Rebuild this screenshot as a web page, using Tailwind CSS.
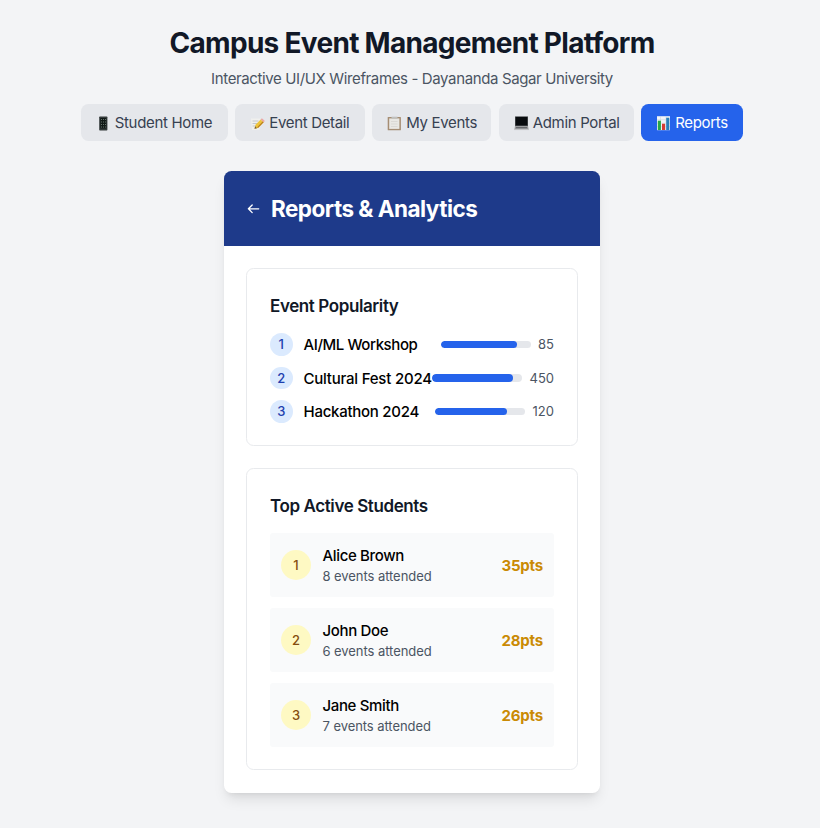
<!DOCTYPE html>
<html lang="en">
<head>
<meta charset="utf-8">
<title>Campus Event Management Platform</title>
<script src="https://cdn.jsdelivr.net/npm/@tailwindcss/browser@4"></script>
</head>
<body class="h-[828px] overflow-hidden bg-[#f3f4f6] pl-1 font-['Inter',sans-serif] text-[15px] text-black">
<header class="flex flex-col items-center pt-[26px]">
  <h1 class="h-[34px] whitespace-nowrap text-[28px] leading-[34px] font-bold tracking-[-0.7px] text-[#111827]">Campus Event Management Platform</h1>
  <p class="mt-[8px] h-[22px] whitespace-nowrap text-[15px] leading-[22px] tracking-[-0.37px] text-[#4b5563]">Interactive UI/UX Wireframes - Dayananda Sagar University</p>
  <nav class="mt-[14px] flex gap-[7.5px] tracking-[-0.33px] text-[#374151]">
    <button class="flex h-[37px] w-[147px] items-center rounded-[7.5px] bg-[#e5e7eb] pt-px pl-[15px] whitespace-nowrap">
      <svg class="mr-1 h-[15px] w-[15px]" viewBox="0 0 15 15"><rect x="3.2" y=".5" width="8.2" height="14" rx=".7" fill="#343b3b"/><rect x="4.3" y="2" width="6" height="10.5" fill="#111917"/><path d="M5 3.5h1m1 0h1m1 0h1M5 6h1m1 0h1m1 0h1M5 8.5h1m1 0h1m1 0h1M5 11h1m1 0h1m1 0h1" stroke="#65736b"/></svg>
      <span>Student Home</span>
    </button>
    <button class="flex h-[37px] w-[129.5px] items-center rounded-[7.5px] bg-[#e5e7eb] pt-px pl-[15px] whitespace-nowrap">
      <svg class="mr-1 h-[15px] w-[15px]" viewBox="0 0 15 15"><path d="M1 2.5h9.5l-1 11.5H2z" fill="#f0f0ee"/><path d="M2.5 5h6m-6 2.5h5m-5 2.5h3" stroke="#b8bdc5" stroke-width=".8"/><path d="M4.5 12.8l1-4 5.2-5.3 3 2.7L8 12z" fill="#edc43b"/><path d="M7.2 11.2l5.7-6 .8 1L8 12z" fill="#b77d20"/><path d="M10.7 3.5l1.2-1.2 3 2.7-1.2 1.2z" fill="#eba5a5"/><path d="M4.5 12.8l.7-2.5 1.8 1.9z" fill="#705b40"/></svg>
      <span>Event Detail</span>
    </button>
    <button class="flex h-[37px] w-[119px] items-center rounded-[7.5px] bg-[#e5e7eb] pt-px pl-[15px] whitespace-nowrap">
      <svg class="mr-1 h-[15px] w-[15px]" viewBox="0 0 15 15"><rect x=".7" y="1" width="13.2" height="13.3" rx=".6" fill="#a58d73"/><path d="M2.2 2.4h10.2v10.5H2.2z" fill="#e9e8e4"/><path d="M4 5.5h6.5M4 8h6.5M4 10.5h6.5" stroke="#d5d3cf" stroke-width=".7"/><path d="M4.5.7h6v2h-6z" fill="#bfc0bf"/></svg>
      <span>My Events</span>
    </button>
    <button class="flex h-[37px] w-[135px] items-center rounded-[7.5px] bg-[#e5e7eb] pt-px pl-[15px] whitespace-nowrap">
      <svg class="mr-1 h-[15px] w-[15px]" viewBox="0 0 15 15"><path d="M1 .4h13v9.7H1z" fill="#55595c"/><path d="M1.6.9h11.8v8.6H1.6z" fill="#080b0e"/><path d="M1 10.1h13l.7 3.6H.3z" fill="#9d9ea0"/><path d="M2 10.9h11l.3 1.3H1.7z" fill="#66686c"/><path d="M.3 13.2h14.4v.9H.3z" fill="#c6c6c8"/></svg>
      <span>Admin Portal</span>
    </button>
    <button class="flex h-[37px] w-[102px] items-center rounded-[7.5px] bg-[#2563eb] pt-px pl-[15px] whitespace-nowrap text-white">
      <svg class="mr-1 h-[15px] w-[15px]" viewBox="0 0 15 15"><path d="M1 .2h13v14H1z" fill="#f1f4f7"/><path d="M1 3.7h13M1 7.2h13M1 10.7h13M4.5.2v14M10 .2v14" stroke="#c4d2de" stroke-width=".5"/><path d="M1.8 4.7h3.1v9.3H1.8z" fill="#28a647"/><path d="M6 7.7h3.1v6.3H6z" fill="#d63c34"/><path d="M10.2 1.7h3.1v12.3h-3.1z" fill="#287fbc"/></svg>
      <span>Reports</span>
    </button>
  </nav>
</header>
<main class="mx-auto mt-[30px] h-[622px] w-[376px] overflow-hidden rounded-[7.5px] bg-white shadow-[0_9px_14px_-3px_rgb(0_0_0/0.1),0_4px_6px_-4px_rgb(0_0_0/0.1)]">
  <div class="flex h-[75px] items-center bg-[#1e3a8a] pl-[23px] text-white">
    <svg class="h-[13px] w-[13px]" viewBox="0 0 13 13" fill="none" stroke="currentColor" stroke-width="1.3" stroke-linecap="round" stroke-linejoin="round"><path d="M11.7 6.8H1.4M5.2 3L1.4 6.8l3.8 3.8"/></svg>
    <h2 class="ml-[11px] pt-px text-[22.5px] leading-[30px] font-bold tracking-[-0.52px] whitespace-nowrap">Reports &amp; Analytics</h2>
  </div>
  <div class="flex flex-col gap-[22px] px-[22px] pt-[22px]">
    <section class="h-[178px] rounded-[7.5px] border border-[#e8eaed] px-[23px] pt-[24px]">
      <h3 class="h-[27px] text-[17px] leading-[27px] font-semibold tracking-[-0.4px] text-[#111827]">Event Popularity</h3>
      <div class="mt-[13px] flex flex-col gap-[11px] text-[15px]">
        <div class="flex h-[22.5px] items-center">
          <span class="flex size-[22.5px] items-center justify-center rounded-full bg-[#dbeafe] pt-px text-[13px] font-medium text-[#1e40af]">1</span>
          <span class="ml-[11px] pt-[2px] font-medium tracking-[-0.41px] whitespace-nowrap">AI/ML Workshop</span>
          <span class="ml-auto h-[7.5px] w-[90px] shrink-0 overflow-hidden rounded-full bg-[#e5e7eb]"><span class="block h-full rounded-full bg-[#2563eb]" style="width:85%"></span></span>
          <span class="ml-[7.5px] pt-px text-[13px] text-[#4b5563]">85</span>
        </div>
        <div class="flex h-[22.5px] items-center">
          <span class="flex size-[22.5px] shrink-0 items-center justify-center rounded-full bg-[#dbeafe] pt-px text-[13px] font-medium text-[#1e40af]">2</span>
          <span class="ml-[11px] w-[128px] pt-[2px] font-medium tracking-[-0.22px] whitespace-nowrap">Cultural Fest 2024</span>
          <span class="ml-auto h-[7.5px] w-[90px] shrink-0 overflow-hidden rounded-full bg-[#e5e7eb]"><span class="block h-full rounded-full bg-[#2563eb]" style="width:90%"></span></span>
          <span class="ml-[7.5px] pt-px text-[13px] text-[#4b5563]">450</span>
        </div>
        <div class="flex h-[22.5px] items-center">
          <span class="flex size-[22.5px] items-center justify-center rounded-full bg-[#dbeafe] pt-px text-[13px] font-medium text-[#1e40af]">3</span>
          <span class="ml-[11px] pt-[2px] font-medium tracking-[-0.26px] whitespace-nowrap">Hackathon 2024</span>
          <span class="ml-auto h-[7.5px] w-[90px] shrink-0 overflow-hidden rounded-full bg-[#e5e7eb]"><span class="block h-full rounded-full bg-[#2563eb]" style="width:80%"></span></span>
          <span class="ml-[7.5px] pt-px text-[13px] text-[#4b5563]">120</span>
        </div>
      </div>
    </section>
    <section class="h-[302px] rounded-[7.5px] border border-[#e8eaed] px-[23px] pt-[24px]">
      <h3 class="h-[27px] text-[17px] leading-[27px] font-semibold tracking-[-0.4px] text-[#111827]">Top Active Students</h3>
      <div class="mt-[13px] flex flex-col gap-[11px]">
        <div class="flex h-[64px] items-center rounded-[3px] bg-[#f9fafb] px-[11px]">
          <span class="flex size-[30px] items-center justify-center rounded-full bg-[#fef9c3] pt-px text-[13px] font-medium text-[#854d0e]">1</span>
          <div class="ml-[11.5px] pt-px whitespace-nowrap"><p class="text-[15px] leading-[22px] font-medium tracking-[-0.35px]">Alice Brown</p><p class="text-[13px] leading-[19px] tracking-[-0.06px] text-[#4b5563]">8 events attended</p></div>
          <span class="ml-auto pt-[2px] font-bold tracking-[-0.2px] text-[#ca8a04]">35pts</span>
        </div>
        <div class="flex h-[64px] items-center rounded-[3px] bg-[#f9fafb] px-[11px]">
          <span class="flex size-[30px] items-center justify-center rounded-full bg-[#fef9c3] pt-px text-[13px] font-medium text-[#854d0e]">2</span>
          <div class="ml-[11.5px] pt-px whitespace-nowrap"><p class="text-[15px] leading-[22px] font-medium tracking-[-0.35px]">John Doe</p><p class="text-[13px] leading-[19px] tracking-[-0.06px] text-[#4b5563]">6 events attended</p></div>
          <span class="ml-auto pt-[2px] font-bold tracking-[-0.2px] text-[#ca8a04]">28pts</span>
        </div>
        <div class="flex h-[64px] items-center rounded-[3px] bg-[#f9fafb] px-[11px]">
          <span class="flex size-[30px] items-center justify-center rounded-full bg-[#fef9c3] pt-px text-[13px] font-medium text-[#854d0e]">3</span>
          <div class="ml-[11.5px] pt-px whitespace-nowrap"><p class="text-[15px] leading-[22px] font-medium tracking-[-0.35px]">Jane Smith</p><p class="text-[13px] leading-[19px] tracking-[-0.06px] text-[#4b5563]">7 events attended</p></div>
          <span class="ml-auto pt-[2px] font-bold tracking-[-0.2px] text-[#ca8a04]">26pts</span>
        </div>
      </div>
    </section>
  </div>
</main>
</body>
</html>
